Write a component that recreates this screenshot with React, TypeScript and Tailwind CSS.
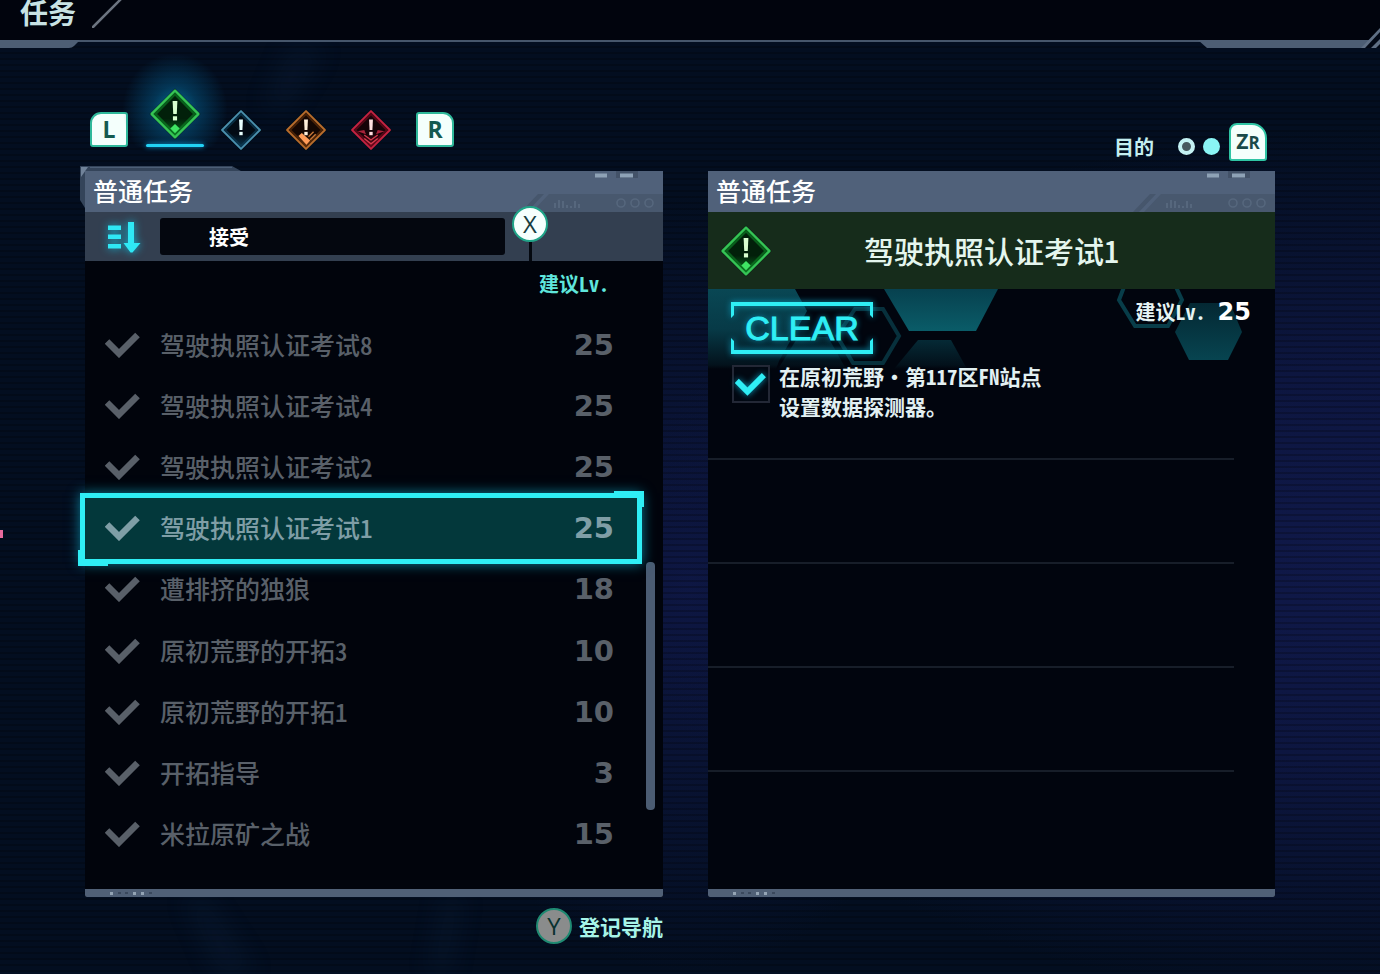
import { useState } from "react";

type Quest = { name: string; level: number };

const quests: Quest[] = [
  { name: "驾驶执照认证考试8", level: 25 },
  { name: "驾驶执照认证考试4", level: 25 },
  { name: "驾驶执照认证考试2", level: 25 },
  { name: "驾驶执照认证考试1", level: 25 },
  { name: "遭排挤的独狼", level: 18 },
  { name: "原初荒野的开拓3", level: 10 },
  { name: "原初荒野的开拓1", level: 10 },
  { name: "开拓指导", level: 3 },
  { name: "米拉原矿之战", level: 15 },
];

type Tone = "green" | "blue" | "orange" | "red";

const tones: Record<Tone, { edge: string; glow: string; fill: string; mark: string }> = {
  green: { edge: "#35c455", glow: "#0b7a22", fill: "#02200a", mark: "#d9ffd0" },
  blue: { edge: "#4a8fae", glow: "#0b3a54", fill: "#020a14", mark: "#e8ffff" },
  orange: { edge: "#b86c2c", glow: "#5c2c08", fill: "#140703", mark: "#fff0dc" },
  red: { edge: "#c42242", glow: "#6d0a1c", fill: "#160308", mark: "#ffdfe0" },
};

function Diamond({ tone, className }: { tone: Tone; className: string }) {
  const t = tones[tone];
  return (
    <svg viewBox="0 0 50 50" className={className} aria-hidden="true">
      <defs>
        <linearGradient id={`fill-${tone}`} x1="0" y1="0" x2="0" y2="1">
          <stop offset="0" stopColor={t.fill} />
          <stop offset="0.6" stopColor={t.fill} />
          <stop offset="1" stopColor={t.glow} />
        </linearGradient>
      </defs>
      <path d="M25 0.5 49.5 25 25 49.5 0.5 25Z" fill="#03110c" />
      <path
        d="M25 2.5 47.5 25 25 47.5 2.5 25Z"
        fill={`url(#fill-${tone})`}
        stroke={t.edge}
        strokeWidth={2.4}
        strokeLinejoin="round"
      />
      <path d="M25 6 44 25 25 44 6 25Z" fill="none" stroke={t.glow} strokeWidth="2.4" opacity="0.7" />
      {tone === "orange" && (
        <>
          <path d="m16 32 4-3.500 10 9-4.500 5Z" fill="#ff9c58" />
          <path d="m28 33 6-6M30 36.500l6.500-6.500" stroke="#c87838" strokeWidth="1.600" fill="none" />
        </>
      )}
      {tone === "red" && (
        <>
          <path d="M9 26.500 17 25l2 5Z M41 26.500 33 25l-2 5Z" fill="#a8233a" />
          <path d="m17 31 8 6 8-6M17 35l8 6.500 8-6.500" stroke="#d63a4e" strokeWidth="1.500" fill="none" />
        </>
      )}
      {tone === "green" && <path d="m25 34.500 4.500 4.500-4.500 4.500-4.500-4.500Z" fill="#3fe463" />}
      <path d="M22.700 12.500h4.600l-.6 12.500h-3.400Z" fill={t.mark} />
      <rect x="23" y="27.200" width="4" height="4" fill={t.mark} />
    </svg>
  );
}

function Check({ className }: { className: string }) {
  return (
    <svg viewBox="0 0 36 26" className={className} fill="none" aria-hidden="true">
      <path d="m2 9.500 12 12L32.500 3" stroke="currentColor" strokeWidth="6.500" />
    </svg>
  );
}

function PanelHead({ title }: { title: string }) {
  return (
    <div className="relative flex h-[41px] items-center bg-[#50617a] px-2 pb-1">
      <svg className="absolute top-0 right-0 h-[41px] w-[150px]" viewBox="0 0 150 41" aria-hidden="true">
        <path d="M8 41 25 23h6L14 41Z" fill="#46566c" />
        <path d="M19 41 36 23h114v18Z" fill="#48586e" />
        <path d="M103 0h22v7h-22Z" fill="#435268" />
        <path d="M82 2.500h12v4H82ZM107 2.500h13v4h-13Z" fill="#8ea2b6" />
        <path d="M42 37v-5M46 37v-8M50 37v-7M54 37v-3M58 37v-2M62 37v-7M66 37v-4" stroke="#56677d" strokeWidth="2" />
        <g fill="none" stroke="#56677d" strokeWidth="1.600">
          <circle cx="108" cy="32" r="4" />
          <circle cx="122" cy="32" r="4" />
          <circle cx="136" cy="32" r="4" />
        </g>
      </svg>
      <h2 className="relative text-[25px] leading-8 font-medium text-white">{title}</h2>
    </div>
  );
}

function PanelFoot() {
  return (
    <div className="h-2 rounded-b-[2px] bg-[#506076]">
      <svg className="ml-6 h-2 w-12" viewBox="0 0 48 8" aria-hidden="true">
        <path d="M1 3h3v3H1ZM24 3h3v3h-3ZM32 3h3v3h-3Z" fill="#94a4b4" />
        <path d="M9 3h3v2H9ZM16 3h3v2h-3ZM40 3h3v2h-3Z" fill="#3a485c" />
      </svg>
    </div>
  );
}

function Header() {
  return (
    <header className="relative h-12">
      <div className="flex h-10 items-start bg-[#01040d] pl-5">
        <h1 className="text-[28px] leading-6 font-bold text-[#c8e2e4]">任务</h1>
        <svg className="ml-4 h-7 w-8" viewBox="0 0 32 28" aria-hidden="true">
          <path d="M1 27 29-1" stroke="#6c7480" strokeWidth="2.500" strokeLinecap="round" />
        </svg>
      </div>
      <div className="h-[2px] bg-[#46566b]" />
      <svg className="absolute bottom-0 left-0 h-2 w-20" viewBox="0 0 80 8" aria-hidden="true">
        <path d="M0 0h80l-2 2-4 4q-2 2-5 2H0Z" fill="#4d5e74" />
      </svg>
      <svg className="absolute right-0 bottom-0 h-[20px] w-[182px]" viewBox="0 0 182 20" aria-hidden="true">
        <path d="M0 12h182v8H9Z" fill="#4d5e74" />
        <path d="M182 2 165 20h17Z" fill="#020815" />
        <path d="M182 0v4l-15 16h-4Z" fill="#5f6f84" />
        <path d="M182 11v5l-4 4h-5Z" fill="#5f6f84" />
      </svg>
    </header>
  );
}

const tabs: { tone: Tone; label: string }[] = [
  { tone: "blue", label: "基本任务" },
  { tone: "orange", label: "讨伐任务" },
  { tone: "red", label: "紧急任务" },
];

function Toolbar() {
  return (
    <div className="relative flex h-[115px] items-end justify-between pr-[113px] pb-[2px] pl-[90px]">
      <nav className="mb-[10px] flex items-end">
        <button className="mb-1 h-[35px] w-[38px] rounded-[3px] rounded-tl-[11px] border-2 border-[#2fb89a] bg-[#f4fffc] font-['Open_Sans',sans-serif] text-[23px] leading-[31px] font-bold text-[#145a50]">
          L
        </button>
        <button
          aria-label="普通任务"
          className="relative mb-1 ml-[18px] flex h-[94px] w-[58px] flex-col items-center justify-end"
        >
          <span className="absolute -inset-x-6 inset-y-0 bg-[radial-gradient(ellipse_at_50%_60%,#046a96_0%,#04507a99_30%,transparent_70%)]" />
          <Diamond tone="green" className="relative mb-1 h-[52px] w-[52px]" />
          <span className="relative h-[3px] w-full rounded bg-[#22d3f5] shadow-[0_0_5px_#0aa0e0]" />
        </button>
        <div className="ml-1 flex">
          {tabs.map((tab) => (
            <button key={tab.tone} aria-label={tab.label} className="flex w-[65px] justify-center">
              <Diamond tone={tab.tone} className="h-[42px] w-[42px]" />
            </button>
          ))}
        </div>
        <button className="mb-1 ml-[13px] h-[35px] w-[38px] rounded-[3px] rounded-tr-[11px] border-2 border-[#2fb89a] bg-[#f4fffc] font-['Open_Sans',sans-serif] text-[23px] leading-[31px] font-bold text-[#145a50]">
          R
        </button>
      </nav>
      <div className="flex items-end">
        <span className="mb-1 text-[20px] leading-5 font-bold text-[#c4eef0]">目的</span>
        <span className="mb-[6px] ml-6 size-[17px] rounded-full border-4 border-[#c4f2f4] bg-[#47585f]" />
        <span className="mb-[6px] ml-2 size-[17px] rounded-full bg-[#8af5f5]" />
        <button className="ml-[9px] h-[38px] w-[38px] rounded-[3px] rounded-tl-[8px] rounded-tr-[15px] border-2 border-[#2fc4a4] bg-[#f4fffc] font-['Open_Sans',sans-serif] leading-8 font-bold text-[#1a4a4a]">
          <span className="text-[21px]">Z</span>
          <span className="text-[17px]">R</span>
        </button>
      </div>
    </div>
  );
}

function SelectionFrame() {
  return (
    <span className="absolute -inset-y-[5px] right-0 -left-[5px] border-[5px] border-[#2feef5] bg-[#03383b] shadow-[0_0_12px_#0b7c96]">
      <span className="absolute -top-[7px] -right-[7px] h-4 w-[30px] border-t-[6px] border-r-[6px] border-[#2feef5]" />
      <span className="absolute -bottom-[7px] -left-[7px] h-4 w-[30px] border-b-[6px] border-l-[6px] border-[#2feef5]" />
    </span>
  );
}

function QuestList() {
  const [selected, setSelected] = useState(3);
  return (
    <section className="relative flex flex-col bg-[#01040c]">
      <svg className="absolute -top-[5px] -left-[5px] h-[42px] w-[166px]" viewBox="0 0 166 42" aria-hidden="true">
        <path d="M0 0h152l9 5H12L5 14v28L0 34Z" fill="#34445a" />
        <path d="M1 1h7L1 11Z" fill="#71839a" />
        <path d="M10 1.500h142" stroke="#4d5f77" />
      </svg>
      <PanelHead title="普通任务" />
      <div className="relative flex h-[49px] items-center bg-[#333f50] pl-[22px]">
        <svg className="h-9 w-9 drop-shadow-[0_0_4px_#12b8d8]" viewBox="0 0 36 36" aria-hidden="true">
          <path d="M1 6.500h13v4.500H1ZM1 15.500h13v4.500H1ZM1 25h13v4.500H1Z" fill="#2fe8f5" />
          <path d="M21 3h6v21h6.500L25.500 33.500h-2L16.500 24H21Z" fill="#2fe8f5" />
        </svg>
        <select
          aria-label="排序"
          className="ml-[17px] h-[37px] w-[62%] appearance-none rounded-[3px] bg-[#04070f] pl-[49px] text-[20px] font-bold text-white"
        >
          <option>接受</option>
        </select>
        <div className="absolute -top-[6px] right-[115px] flex flex-col items-center">
          <button className="size-9 rounded-full border-2 border-[#20a488] bg-[#f6fffd] font-['Open_Sans',sans-serif] text-[24px] leading-8 font-medium text-[#163c40]">
            X
          </button>
          <span className="h-[19px] w-[3px] bg-[#04080f]" />
        </div>
      </div>
      <p className="pr-[54px] pb-[7px] text-right text-[20px] leading-[46px] font-bold text-[#5fe6dc]">建议Lv.</p>
      <div className="flex flex-1 pb-6">
        <ul className="flex flex-1 flex-col">
          {quests.map((quest, i) => (
            <li key={quest.name} className="flex min-h-14 flex-1">
              <button
                onClick={() => setSelected(i)}
                className={
                  i === selected
                    ? "relative z-10 flex flex-1 items-center text-left text-[#7f9ea6]"
                    : "relative flex flex-1 items-center text-left text-[#596069]"
                }
              >
                {i === selected && <SelectionFrame />}
                <Check className="relative ml-5 h-[26px] w-9" />
                <span className="relative ml-[19px] flex-1 pb-[2px] text-[25px] leading-8 font-medium">
                  {quest.name}
                </span>
                <span className="relative pr-7 font-['DejaVu_Sans'] text-[29px] leading-8 font-bold">
                  {quest.level}
                </span>
              </button>
            </li>
          ))}
        </ul>
        <div className="mr-2 ml-1 flex w-[9px] flex-col">
          <div className="basis-[45%]" />
          <div className="basis-[45%] rounded-sm bg-[#4b5c73]" />
        </div>
      </div>
      <PanelFoot />
    </section>
  );
}

function Hexagons() {
  return (
    <>
      <svg className="absolute top-0 left-0 h-20 w-[300px]" viewBox="0 0 300 80" aria-hidden="true">
        <defs>
          <linearGradient id="hex" x1="0" y1="0" x2="0" y2="80" gradientUnits="userSpaceOnUse">
            <stop offset="0" stopColor="#094754" />
            <stop offset="0.5" stopColor="#073a47" />
            <stop offset="0.95" stopColor="#03121c" />
            <stop offset="1" stopColor="#01050e" />
          </linearGradient>
          <linearGradient id="hexBright" x1="0" y1="0" x2="0" y2="1">
            <stop offset="0" stopColor="#07414f" />
            <stop offset="1" stopColor="#0a5c68" />
          </linearGradient>
        </defs>
        <path d="M0 0h87l12 22-28 50-3 8H0Z" fill="url(#hex)" />
        <path d="m70 80 20-32h30l18 32Z" fill="url(#hex)" opacity="0.8" />
        <path d="M176 0h114l-22 42h-67Z" fill="url(#hexBright)" />
        <path d="M186 80l24-29h33l16 29Z" fill="url(#hex)" opacity="0.9" />
        <path d="M147 20h28l16 27-16 27h-30l-16-27Z" fill="none" stroke="#07303c" strokeWidth="4" />
      </svg>
      <svg className="absolute top-0 right-0 h-20 w-[165px]" viewBox="0 0 165 80" aria-hidden="true">
        <defs>
          <linearGradient id="hexSmall" x1="0" y1="0" x2="0" y2="1">
            <stop offset="0" stopColor="#042833" />
            <stop offset="1" stopColor="#074450" />
          </linearGradient>
        </defs>
        <path d="m14-2-5 13 16 26h33l14-26-6-13" fill="none" stroke="#083d49" strokeWidth="4" />
        <path d="M80 14h40l12 29-14 28H79L65 43Z" fill="url(#hexSmall)" />
      </svg>
    </>
  );
}

function QuestDetail() {
  return (
    <section className="relative flex flex-col bg-[#01050e]">
      <PanelHead title="普通任务" />
      <div className="relative flex h-[77px] items-center justify-center bg-[#162c1b]">
        <Diamond tone="green" className="absolute left-3 h-[52px] w-[52px]" />
        <h3 className="pb-[2px] text-[30px] leading-10 font-medium text-[#e4f6ee]">驾驶执照认证考试1</h3>
      </div>
      <div className="relative flex-1">
        <Hexagons />
        <div className="relative flex h-[67px] items-start justify-between pr-6 pl-[23px]">
          <div className="relative mt-[13px] h-[52px] w-[142px] text-center">
            <svg
              className="absolute inset-0 drop-shadow-[0_0_3px_#0898b8]"
              viewBox="0 0 142 52"
              fill="#2feef5"
              aria-hidden="true"
            >
              <path d="M0 0h142v16l-3-3V4H3v9l-3 3ZM0 52h142V36l-3 3v9H3v-9l-3-3Z" />
            </svg>
            <span className="relative font-['Liberation_Sans'] text-[34px] leading-[52px] text-[#2feef5] [-webkit-text-stroke:1px_#2feef5] [text-shadow:0_0_6px_#0a9cc0]">
              CLEAR
            </span>
          </div>
          <p className="mt-2 flex items-center gap-3 text-[20px] leading-[30px] font-bold text-[#e6f4f4]">
            建议Lv.
            <span className="font-['DejaVu_Sans'] text-[24px] font-bold text-white">25</span>
          </p>
        </div>
        <ul className="relative mr-[41px]">
          <li className="flex h-[104px] items-start border-b-2 border-[#171e29] pt-[5px] pl-6">
            <span className="mt-1 flex h-[38px] w-[38px] items-center justify-center border-2 border-[#232836] bg-[#020812] text-[#2feef5]">
              <Check className="h-[24px] w-[32px] shrink-0 drop-shadow-[0_0_3px_#0898b8]" />
            </span>
            <p className="ml-[9px] text-[21px] leading-[30px] font-bold text-[#e2f0f2]">
              在原初荒野・第117区FN站点
              <br />
              设置数据探测器。
            </p>
          </li>
          <li className="h-[104px] border-b-2 border-[#171e29]" />
          <li className="h-[104px] border-b-2 border-[#171e29]" />
          <li className="h-[104px] border-b-2 border-[#171e29]" />
        </ul>
      </div>
      <PanelFoot />
    </section>
  );
}

function Streaks() {
  return (
    <svg
      className="absolute inset-0 h-full w-full blur-md"
      viewBox="0 0 1380 974"
      preserveAspectRatio="none"
      aria-hidden="true"
    >
      <g fill="#2a4a78" opacity="0.12">
        <path d="M290 48h34l-36 60h-24Z" />
        <path d="M185 897h20l50 77h-36Z" />
        <path d="M430 974l14-77h18l-14 77Z" />
      </g>
    </svg>
  );
}

export default function App() {
  return (
    <div className="relative flex min-h-screen flex-col overflow-hidden bg-[#030e20] bg-[repeating-linear-gradient(to_bottom,transparent_0px,transparent_4px,#00000038_4px,#00000038_6px),radial-gradient(ellipse_55%_45%_at_100%_58%,#10194a_0%,#0d1640_45%,transparent_100%),radial-gradient(ellipse_20%_40%_at_50%_60%,#0e1744_0%,transparent_100%)] font-['Noto_Sans_CJK_SC',sans-serif] [font-feature-settings:'hwid']">
      <Streaks />
      <Header />
      <Toolbar />
      <span className="absolute top-[530px] left-0 h-2 w-[3px] bg-[#e86a9c]" />
      <main className="relative grid flex-1 grid-cols-[578fr_567fr] grid-rows-[1fr_auto] gap-x-[45px] pt-2 pr-[105px] pl-[85px]">
        <QuestList />
        <QuestDetail />
        <button className="mt-[11px] mb-[30px] flex items-center gap-[7px] justify-self-end text-[21px] leading-9 font-bold text-[#a6f4e8]">
          <span className="size-9 rounded-full border-2 border-[#1f8a72] bg-[#8a8c8c] font-['Open_Sans',sans-serif] text-[24px] leading-8 font-medium text-[#0a3230]">
            Y
          </span>
          登记导航
        </button>
      </main>
    </div>
  );
}
